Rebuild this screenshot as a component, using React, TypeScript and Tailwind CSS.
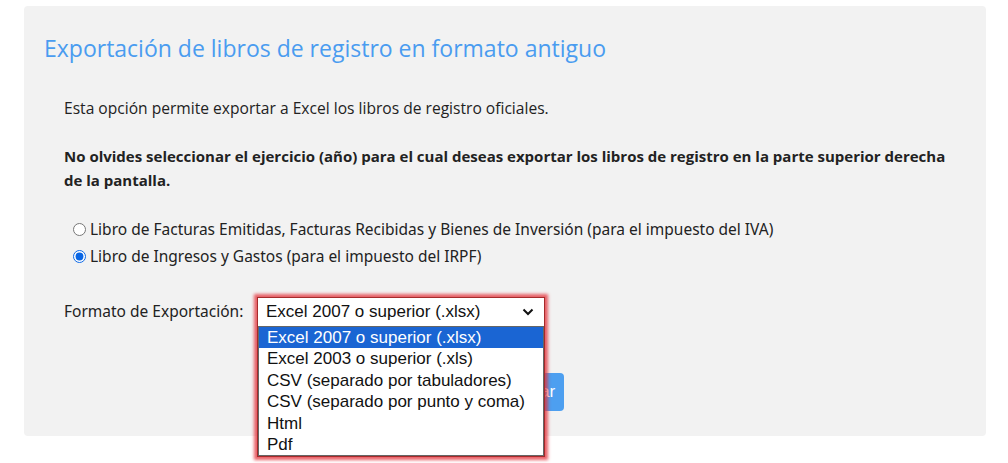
import React from "react";

export default function App() {
  const options = [
    "Excel 2007 o superior (.xlsx)",
    "Excel 2003 o superior (.xls)",
    "CSV (separado por tabuladores)",
    "CSV (separado por punto y coma)",
    "Html",
    "Pdf",
  ];
  return (
    <div className="w-[1008px] h-[463px] bg-white overflow-hidden pt-[6px] pl-[24px]">
      <div className="w-[962px] h-[430px] bg-[#f2f2f2] rounded-[4px] pt-[27px] pl-[20px] text-[#222]" style={{ fontFamily: '"Open Sans", sans-serif' }}>
        <h1 className="text-[23px] leading-[30px] text-[#4a9cf0]">Exportación de libros de registro en formato antiguo</h1>
        <div className="pl-[20px] pt-[33px]">
          <p className="text-[15.6px] leading-[24px]">Esta opción permite exportar a Excel los libros de registro oficiales.</p>
          <p className="text-[15px] leading-[24px] font-bold mt-[24px] pr-[20px]">
            No olvides seleccionar el ejercicio (año) para el cual deseas exportar los libros de registro en la parte superior derecha de la pantalla.
          </p>
          <div className="mt-[26px] flex flex-col gap-[4px] text-[15.5px] leading-[23px]" style={{ fontFamily: '"Noto Sans", sans-serif' }}>
            <label className="flex items-center gap-[4px]">
              <input type="radio" name="libro" className="w-[13px] h-[13px] m-0 ml-[9px] accent-[#0a66e4]" />
              <span>Libro de Facturas Emitidas, Facturas Recibidas y Bienes de Inversión (para el impuesto del IVA)</span>
            </label>
            <label className="flex items-center gap-[4px]">
              <input type="radio" name="libro" defaultChecked className="w-[13px] h-[13px] m-0 ml-[9px] accent-[#0a66e4]" />
              <span>Libro de Ingresos y Gastos (para el impuesto del IRPF)</span>
            </label>
          </div>
          <div className="mt-[29px] flex items-center" style={{ fontFamily: '"Noto Sans", sans-serif' }}>
            <span className="text-[15.5px] w-[193px]">Formato de Exportación:</span>
            <div className="relative">
              <div className="w-[288px] h-[29px] bg-white flex items-center justify-between pl-[9px] pr-[11px] text-[17px] text-[#111]" style={{ fontFamily: '"Liberation Sans", Arial, sans-serif' }}>
                <span>Excel 2007 o superior (.xlsx)</span>
                <svg width="12" height="8" viewBox="0 0 12 8" fill="none">
                  <path d="M1.5 1.5 L6 6 L10.5 1.5" stroke="#111" strokeWidth="2" />
                </svg>
              </div>
              <div className="absolute left-0 top-0 w-[288px] z-10 border border-[#a52a2a] shadow-[0_0_3px_3px_rgba(228,45,55,0.75)]">
                <div className="h-[28px]" />
                <div className="bg-white border border-[#666] text-[17px] leading-[21.4px] text-[#111]" style={{ fontFamily: '"Liberation Sans", Arial, sans-serif' }}>
                  {options.map((o, i) => (
                    <div key={o} className={i === 0 ? "bg-[#1a65d3] text-white pl-[8px]" : "pl-[8px]"}>{o}</div>
                  ))}
                </div>
              </div>
            </div>
          </div>
          <div className="mt-[47px] pl-[418px]">
            <button className="h-[38px] w-[82px] rounded-[4px] bg-[#4d9ff0] text-white text-[17px] pl-[8px] pr-[8px]" style={{ fontFamily: '"Liberation Sans", Arial, sans-serif' }}>Exportar</button>
          </div>
        </div>
      </div>
    </div>
  );
}
